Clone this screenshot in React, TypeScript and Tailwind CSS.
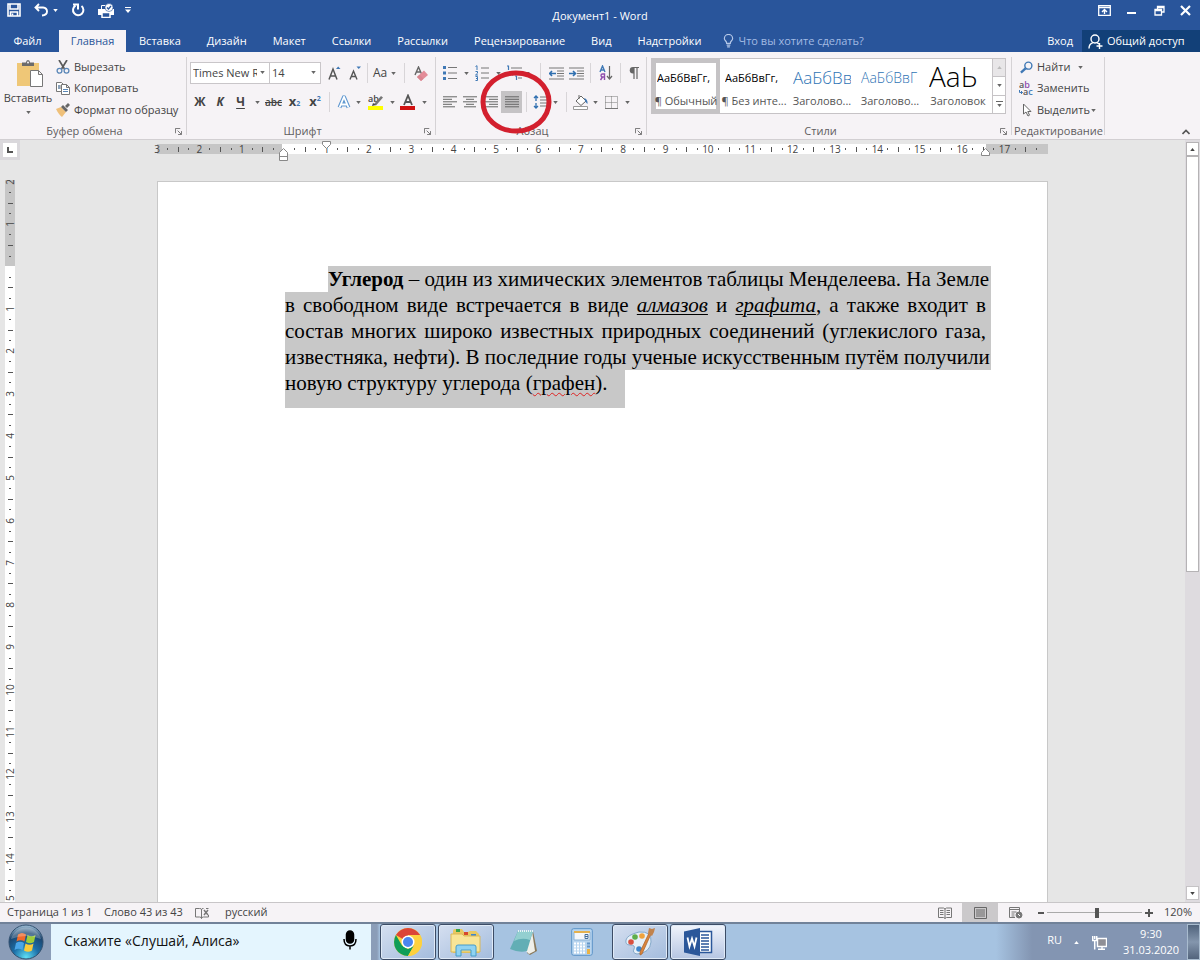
import React from 'react';
import clsx from 'clsx';

const TABS = ['Вставка', 'Дизайн', 'Макет', 'Ссылки', 'Рассылки', 'Рецензирование', 'Вид', 'Надстройки'];

const STYLES = [
  { preview: 'АаБбВвГг,', name: '¶ Обычный', look: 'text-[11px] text-black', active: true },
  { preview: 'АаБбВвГг,', name: '¶ Без инте...', look: 'text-[11px] text-black' },
  { preview: 'АаБбВв', name: 'Заголово...', look: 'text-[17px] font-light text-[#2e74b5]' },
  { preview: 'АаБбВвГ', name: 'Заголово...', look: 'text-[14px] font-light text-[#2e74b5]' },
  { preview: 'АаЬ', name: 'Заголовок', look: 'pb-1 text-[28px] font-light text-black' },
];

const Caret: React.FC<{ className?: string }> = ({ className }) => (
  <svg viewBox="0 0 6 4" className={clsx('w-[5px] h-[3px] shrink-0 fill-current', className)}>
    <path d="M0 0h6L3 4z" />
  </svg>
);

const Sep: React.FC<{ className?: string }> = ({ className }) => (
  <div className={clsx('w-px h-5 bg-[#d8d5d8] shrink-0', className)} />
);

interface BtnProps {
  label: string;
  className?: string;
  children?: React.ReactNode;
}

const Btn: React.FC<BtnProps> = ({ label, className, children }) => (
  <button aria-label={label} className={clsx('flex h-[22px] shrink-0 items-center justify-center', className)}>
    {children}
  </button>
);

const Drop: React.FC<{ label: string; className?: string }> = ({ label, className = 'w-3' }) => (
  <Btn label={label} className={className}>
    <Caret className="text-[#666]" />
  </Btn>
);

const Group: React.FC<{ title: string; className: string; launcher?: boolean; children: React.ReactNode }> = ({
  title,
  className,
  launcher = true,
  children,
}) => (
  <section className={clsx('relative flex shrink-0 flex-col pt-[5px]', className)}>
    <div className="flex-1">{children}</div>
    <div className="flex h-[15px] items-center text-[#5f5d60]">
      <span className={clsx('flex-1 whitespace-nowrap text-center', launcher && 'pr-[6px]')}>{title}</span>
      {launcher && (
        <button aria-label={`${title}: параметры`} className="pr-[5px]">
          <svg viewBox="0 0 8 8" className="h-[7px] w-[7px] fill-none stroke-[#666]">
            <path d="M.5 6V.5H6M3 3l4 4M7.5 3.5v4h-4" />
          </svg>
        </button>
      )}
    </div>
    <div className="absolute right-0 top-[5px] bottom-1 w-px bg-[#d5d2d5]" />
  </section>
);

const Lines: React.FC<{ rows: [number, number][] }> = ({ rows }) => (
  <svg viewBox="0 0 14 12" className="h-3 w-[14px] stroke-[#666]">
    {rows.map(([from, to], i) => (
      <path key={i} d={`M${from} ${i * 2.5 + 0.8}H${to}`} />
    ))}
  </svg>
);

const TitleBar: React.FC = () => (
  <div className="relative flex h-[30px] items-start justify-between text-white">
    <div className="flex h-5 items-center pl-[7px]">
      <button aria-label="Сохранить">
        <svg viewBox="0 0 14 14" className="h-[14px] w-[14px] fill-none stroke-white" strokeWidth="1.600">
          <path d="M1 1h12v12H1zM3 1v5h8V1M3.500 13V9h7v4" />
          <path d="M5.500 10.500v2" />
        </svg>
      </button>
      <button aria-label="Отменить" className="ml-[13px]">
        <svg viewBox="0 0 14 14" className="h-[14px] w-[14px] fill-none stroke-white" strokeWidth="1.900">
          <path d="M5 1L1.500 4.500 5 8M1.500 4.500H9q4 .5 4 4t-5 4" />
        </svg>
      </button>
      <button aria-label="Список отмены" className="ml-[5px]">
        <Caret />
      </button>
      <button aria-label="Повторить" className="ml-[13px]">
        <svg viewBox="0 0 14 14" className="h-[14px] w-[14px] fill-none stroke-white" strokeWidth="2">
          <path d="M4.500 2.600A5.200 5.200 0 1 0 10.500 3M7 6.500V1.500H2" />
        </svg>
      </button>
      <button aria-label="Быстрая печать" className="ml-[13px]">
        <svg viewBox="0 0 16 15" className="h-[15px] w-4 fill-none stroke-white">
          <path d="M0 6h16v6H0z" fill="white" stroke="none" />
          <path d="M3.500 6V2.500h4" />
          <path d="M4 9.500h8v5H4z" fill="#2a569b" strokeWidth="1.500" />
          <circle cx="11" cy="4.500" r="4" fill="white" stroke="#2a569b" strokeWidth=".6" />
          <path d="M9 4.500l1.500 1.500L13 3" stroke="#2a569b" strokeWidth="1.300" />
        </svg>
      </button>
      <button aria-label="Настройка панели быстрого доступа" className="ml-[11px]">
        <svg viewBox="0 0 6 6" className="h-[6px] w-[6px] fill-white">
          <path d="M0 0h6v1H0zM0 2.500h6L3 6z" />
        </svg>
      </button>
    </div>
    <h1 className="absolute left-1/2 top-2 -translate-x-1/2 whitespace-nowrap leading-4">Документ1 - Word</h1>
    <div className="flex h-5 items-center gap-[15px] pr-[9px]">
      <button aria-label="Параметры отображения ленты">
        <svg viewBox="0 0 13 11" className="h-[11px] w-[13px] fill-none stroke-white">
          <path d="M.7 .7h11.600v9.600H.7zM.7 2.500h11.600" strokeWidth="1.300" />
          <path d="M6.500 9V4.500M4 7l2.500-2.500L9 7" strokeWidth="1.400" />
        </svg>
      </button>
      <button aria-label="Свернуть">
        <svg viewBox="0 0 11 11" className="h-[11px] w-[11px] fill-white">
          <path d="M1 7h9v2H1z" />
        </svg>
      </button>
      <button aria-label="Восстановить" className="ml-[2px]">
        <svg viewBox="0 0 11 11" className="h-[11px] w-[11px] fill-none stroke-white" strokeWidth="1.300">
          <path d="M1 4.500h6.500V10H1zM1 5.500h6.500M3.500 4V1.500H10V7H8M3.500 2.500H10" />
        </svg>
      </button>
      <button aria-label="Закрыть">
        <svg viewBox="0 0 11 11" className="h-[11px] w-[11px] stroke-white" strokeWidth="2.200">
          <path d="M1 1l9 9M10 1l-9 9" />
        </svg>
      </button>
    </div>
  </div>
);

const TabBar: React.FC = () => (
  <nav className="flex h-[22px] items-stretch text-white">
    <button className="w-[59px] pr-1">Файл</button>
    <button className="w-[67px] bg-[#f6f3f6] text-[#2b579a]">Главная</button>
    {TABS.map((tab) => (
      <button key={tab} className="px-[13px]">
        {tab}
      </button>
    ))}
    <label className="ml-2 flex flex-1 items-center gap-[5px]">
      <svg viewBox="0 0 12 15" className="h-[14px] w-[11px] fill-none stroke-[#b5c8e8]" strokeWidth="1.300">
        <path d="M4 10Q4 8.500 2.500 7 1.500 6 1.500 4.700a4.300 4.200 0 0 1 9 0Q10.500 6 9.500 7 8 8.500 8 10zM4 12h4M4.500 14h3" />
      </svg>
      <input
        type="text"
        aria-label="Что вы хотите сделать?"
        placeholder="Что вы хотите сделать?"
        className="w-40 bg-transparent outline-none placeholder:text-[#a3bbe3]"
      />
    </label>
    <button className="px-[9px]">Вход</button>
    <button className="flex w-[118px] items-center gap-1 whitespace-nowrap bg-[#124078] pl-[6px]">
      <svg viewBox="0 0 15 15" className="h-[15px] w-[15px] shrink-0 fill-none stroke-white" strokeWidth="1.400">
        <circle cx="7" cy="5" r="4" />
        <path d="M1 14.500Q1 10 5 8.700M9 8.700l2 1.300M11.500 9v6M8.500 12h6" />
      </svg>
      Общий доступ
    </button>
  </nav>
);

const ClipboardGroup: React.FC = () => (
  <Group title="Буфер обмена" className="w-[187px]">
    <div className="flex">
      <button className="flex w-[56px] flex-col items-center pt-[2px]">
        <svg viewBox="0 0 28 30" className="ml-1 h-[30px] w-7">
          <path d="M1 4h22v23H1z" fill="#efc777" />
          <path d="M6 7V3.500h4Q10 1 12 1t2 2.500h4V7z" fill="#6b6b6b" />
          <circle cx="12" cy="3.500" r="1" fill="#f6f3f6" />
          <path d="M14.500 11.500h8l4 4v12h-12zM22.500 11.500v4h4" fill="white" stroke="#777" />
        </svg>
        <span className="mt-px leading-4">Вставить</span>
        <Caret className="mt-[5px] text-[#666]" />
      </button>
      <div className="flex flex-col">
        <button className="flex h-5 items-center gap-1">
          <svg viewBox="0 0 14 14" className="h-[14px] w-[14px] fill-none">
            <path d="M3 0l5.500 9M11 0L5.500 9" stroke="#5a5a5a" strokeWidth="1.700" />
            <circle cx="3.500" cy="10.800" r="2.400" stroke="#5b87b8" strokeWidth="1.300" />
            <circle cx="10.500" cy="10.800" r="2.400" stroke="#5b87b8" strokeWidth="1.300" />
          </svg>
          Вырезать
        </button>
        <button className="flex h-[22px] items-center gap-1">
          <svg viewBox="0 0 14 14" className="h-[14px] w-[14px] fill-white stroke-[#777]">
            <path d="M.5 1.500h5l2 2v7h-7zM2 5h3M2 7h3" />
            <path d="M5.500 3.500h5l3 3v7h-8zM10.500 3.500v3h3" />
            <path d="M7 8.500h5M7 10.500h5M2 5h2M2 7h2" stroke="#5b87b8" />
          </svg>
          Копировать
        </button>
        <button className="flex h-[22px] items-center gap-1 whitespace-nowrap">
          <svg viewBox="0 0 14 14" className="h-[14px] w-[14px] shrink-0">
            <path d="M0 6l5-2 5 5-4 5Q3 12 0 6z" fill="#efc07a" />
            <path d="M5 4l2-2 5 5-2 2zM9 3l3-3 2 2-3 3z" fill="#666" />
          </svg>
          Формат по образцу
        </button>
      </div>
    </div>
  </Group>
);

const FontGroup: React.FC = () => (
  <Group title="Шрифт" className="w-[249px]">
    <div className="flex items-center pl-[3px] pt-[5px]">
      <div className="relative h-[22px] w-[80px] border border-[#c9c6c9] bg-white">
        <select aria-label="Шрифт" className="h-full w-full appearance-none pl-[2px] pr-[12px] text-[11px] outline-none">
          <option>Times New Roman</option>
        </select>
        <Caret className="pointer-events-none absolute right-1 top-2 text-[#666]" />
      </div>
      <div className="relative -ml-px h-[22px] w-[52px] border border-[#c9c6c9] bg-white">
        <select aria-label="Размер шрифта" className="h-full w-full appearance-none pl-[2px] text-[11px] outline-none">
          <option>14</option>
        </select>
        <Caret className="pointer-events-none absolute right-1 top-2 text-[#666]" />
      </div>
      <Btn label="Увеличить размер шрифта" className="w-[26px]">
        <svg viewBox="0 0 13 14" className="h-[14px] w-[13px] fill-none">
          <path d="M1 13.500L5 3l4 10.500M2.500 10h5" stroke="#555" strokeWidth="1.500" />
          <path d="M8 3h4.500L10.200 .5z" fill="#3f78b5" />
        </svg>
      </Btn>
      <Btn label="Уменьшить размер шрифта" className="w-[16px]">
        <svg viewBox="0 0 12 14" className="h-[14px] w-3 fill-none">
          <path d="M1 13.500L4.500 5 8 13.500M2.500 10.500h4" stroke="#555" strokeWidth="1.400" />
          <path d="M7.500 .5H12L9.700 3z" fill="#3f78b5" />
        </svg>
      </Btn>
      <Sep className="ml-1" />
      <Btn label="Регистр" className="ml-[5px] gap-1">
        <span className="text-[12px]">Aa</span>
        <Caret className="text-[#666]" />
      </Btn>
      <Sep className="ml-2" />
      <Btn label="Удалить все форматирование" className="ml-2 w-4">
        <svg viewBox="0 0 14 15" className="h-[15px] w-[14px]">
          <path d="M1 9L4.500 1 8 9M2.500 6h4" fill="none" stroke="#666" strokeWidth="1.400" />
          <path d="M3 11l7-6.500 4 4.500-7 6z" fill="#e38c98" />
          <path d="M3 11l2.500-2.300 4 4L7 15z" fill="#d98590" />
        </svg>
      </Btn>
    </div>
    <div className="flex items-center pl-[3px] pt-[7px]">
      <Btn label="Полужирный" className="w-[20px] text-[12px] font-bold">Ж</Btn>
      <Btn label="Курсив" className="w-[20px] text-[12px] font-bold italic">К</Btn>
      <Btn label="Подчеркнутый" className="w-[21px] text-[12px] font-bold underline underline-offset-2">Ч</Btn>
      <Drop label="Тип подчеркивания" />
      <Btn label="Зачеркнутый" className="w-[21px] text-[10px] font-semibold line-through">abc</Btn>
      <Btn label="Подстрочный знак" className="w-[21px] text-[13px] font-bold">
        x<sub className="text-[7px] text-[#3f78b5]">2</sub>
      </Btn>
      <Btn label="Надстрочный знак" className="w-[20px] text-[13px] font-bold">
        x<sup className="text-[7px] text-[#3f78b5]">2</sup>
      </Btn>
      <Sep className="ml-1" />
      <Btn label="Текстовые эффекты" className="ml-1 w-[20px]">
        <svg viewBox="0 0 14 14" className="h-[14px] w-[14px] fill-none">
          <path d="M2.500 12.500L7 2l4.500 10.500M4 9.500h6" stroke="#5f97d0" strokeWidth="4" strokeLinejoin="round" />
          <path d="M2.500 12.500L7 2l4.500 10.500M4 9.500h6" stroke="white" strokeWidth="1.800" />
        </svg>
      </Btn>
      <Drop label="Список эффектов" className="w-2" />
      <Btn label="Цвет выделения текста" className="ml-1 w-[20px]">
        <svg viewBox="0 0 16 16" className="h-4 w-4">
          <text x="0" y="8" fontSize="9" fontWeight="600" fontFamily="Open Sans" fill="#444">ab</text>
          <path d="M6 10l7-8 2 1.500-7 8z" fill="#777" />
          <path d="M5 9l-1 3 4-1z" fill="#444" />
          <path d="M0 12h15v4H0z" fill="#ff0" />
        </svg>
      </Btn>
      <Drop label="Цвета выделения" />
      <Btn label="Цвет текста" className="w-[20px]">
        <svg viewBox="0 0 16 16" className="h-4 w-4">
          <path d="M4 11L8 1.500 12 11M5.500 8h5" fill="none" stroke="#555" strokeWidth="1.800" />
          <path d="M0 12h15v4H0z" fill="#d01212" />
        </svg>
      </Btn>
      <Drop label="Цвета текста" />
    </div>
  </Group>
);

const Indent: React.FC<{ flip?: boolean }> = ({ flip }) => (
  <svg viewBox="0 0 15 13" className="h-[13px] w-[15px] fill-none">
    <path d="M0 1h15M8 4h7M8 6.500h7M8 9h7M0 12h15" stroke="#777" />
    <path d={flip ? 'M0 6.500h6M4 4l2.500 2.500L4 9' : 'M7 6.500H1M3 4L.7 6.500 3 9'} stroke="#2f6fb0" strokeWidth="1.600" />
  </svg>
);

const ParagraphGroup: React.FC = () => (
  <Group title="Абзац" className="w-[211px]">
    <div className="flex items-center pl-[6px] pt-[5px]">
      <Btn label="Маркеры" className="w-4">
        <svg viewBox="0 0 14 14" className="h-[14px] w-[14px]">
          <path d="M0 0h3v3H0zM0 5.500h3v3H0zM0 11h3v3H0z" fill="#3f78b5" />
          <path d="M5 1.500h9M5 7h9M5 12.500h9" stroke="#777" />
        </svg>
      </Btn>
      <Drop label="Библиотека маркеров" className="ml-[2px] w-3" />
      <Btn label="Нумерация" className="ml-[2px] w-4">
        <svg viewBox="0 0 14 16" className="h-4 w-[14px]">
          <path d="M6 3h8M6 8h8M6 13h8" stroke="#777" />
          <path
            d="M.5 1.500L2 .7V5M.5 6.500h2v1.700L.5 10h2.500M.5 11.500h2v4h-2M1 13.500h1.500"
            fill="none"
            stroke="#3f78b5"
          />
        </svg>
      </Btn>
      <Drop label="Библиотека нумерации" className="ml-[2px] w-3" />
      <Btn label="Многоуровневый список" className="ml-[2px] w-[17px]">
        <svg viewBox="0 0 17 16" className="h-4 w-[17px]">
          <path d="M5 3h11M9 8h7M12 13h4" stroke="#777" />
          <path d="M1 1h1.500v4M4.500 6.500h2v4M9 11h1.500v4" fill="none" stroke="#3f78b5" strokeWidth="1.200" />
        </svg>
      </Btn>
      <Drop label="Списки" className="w-2" />
      <Sep className="ml-[9px]" />
      <Btn label="Уменьшить отступ" className="ml-[5px] w-[20px]"><Indent /></Btn>
      <Btn label="Увеличить отступ" className="w-[20px]"><Indent flip /></Btn>
      <Sep className="ml-1" />
      <Btn label="Сортировка" className="ml-2 w-[14px]">
        <svg viewBox="0 0 14 16" className="h-4 w-[14px] fill-none" strokeWidth="1.400">
          <path d="M1 7l2.500-6L6 7M2 5h3" stroke="#3f78b5" />
          <path d="M5.500 15V9H3.500a1.500 1.500 0 0 0 0 3h2M3.500 12L1.500 15" stroke="#8f4fae" />
          <path d="M10.500 1v13M8 11l2.500 3 2.500-3" stroke="#666" strokeWidth="1.200" />
        </svg>
      </Btn>
      <Sep className="ml-[7px]" />
      <Btn label="Отобразить все знаки" className="ml-1 w-[18px]">
        <svg viewBox="0 0 10 12" className="h-3 w-[10px]">
          <path d="M4 0h6v1H4z" fill="#666" />
          <path d="M5 0v12M8 0v12" stroke="#666" strokeWidth="1.200" />
          <path d="M5 0H4a3.200 3.200 0 0 0 0 6.500h1z" fill="#666" />
        </svg>
      </Btn>
    </div>
    <div className="flex items-center pl-1 pt-[7px]">
      <Btn label="По левому краю" className="w-[20px]"><Lines rows={[[0, 14], [0, 9], [0, 14], [0, 9], [0, 12]]} /></Btn>
      <Btn label="По центру" className="w-[20px]"><Lines rows={[[0, 14], [3, 11], [0, 14], [3, 11], [1, 13]]} /></Btn>
      <Btn label="По правому краю" className="w-[21px]"><Lines rows={[[0, 14], [5, 14], [0, 14], [5, 14], [2, 14]]} /></Btn>
      <Btn label="По ширине" className="w-[21px] bg-[#c5c3c5]"><Lines rows={[[0, 14], [0, 14], [0, 14], [0, 14], [0, 14]]} /></Btn>
      <Sep className="ml-1" />
      <Btn label="Интервал" className="ml-1 w-[18px]">
        <svg viewBox="0 0 14 14" className="h-[14px] w-[14px] fill-none">
          <path d="M3 1v5M1 3l2-2 2 2M3 8v5M1 11l2 2 2-2" stroke="#2f6fb0" strokeWidth="1.300" />
          <path d="M7 2h7M7 5h7M7 8h7M7 11h7" stroke="#777" />
        </svg>
      </Btn>
      <Drop label="Список интервалов" />
      <Sep className="ml-[5px]" />
      <Btn label="Заливка" className="ml-1 w-[20px]">
        <svg viewBox="0 0 16 15" className="h-[15px] w-4 fill-none">
          <path d="M3 6l5-5 5 5-5 4.500zM6 4V0" fill="white" stroke="#666" />
          <path d="M11 3q4 1 3.500 6l-2-2z" fill="#3f78b5" />
          <path d="M.5 11.500h14v3H.5z" fill="white" stroke="#999" />
        </svg>
      </Btn>
      <Drop label="Цвета заливки" className="w-[9px]" />
      <Btn label="Границы" className="w-[22px]">
        <svg viewBox="0 0 13 13" className="h-[13px] w-[13px] fill-none stroke-[#777]">
          <path d="M.5 .5h12M.5 6.500h12M.5 .5v12M6.500 .5v12M12.500 .5v12" strokeDasharray="1 1" />
          <path d="M0 12.500h13" />
        </svg>
      </Btn>
      <Drop label="Виды границ" className="w-[10px]" />
    </div>
    <svg viewBox="0 0 72 64" className="pointer-events-none absolute left-11 top-[18px] z-10 h-16 w-[72px]">
      <ellipse cx="36" cy="32" rx="33" ry="29" fill="none" stroke="#d3202e" strokeWidth="5" />
    </svg>
  </Group>
);

const StylesGroup: React.FC = () => (
  <Group title="Стили" className="w-[365px]">
    <div className="ml-1 mt-px flex h-[56px] w-[355px] border border-[#c6c3c6] bg-white">
      {STYLES.map((s, i) => (
        <button
          key={i}
          className={clsx(
            'flex w-[68px] shrink-0 flex-col items-center whitespace-nowrap border-4',
            s.active ? 'border-[#c5c3c5]' : 'border-transparent',
          )}
        >
          <span className={clsx('flex h-[31px] w-[58px] items-center overflow-hidden leading-[30px]', s.look)}>
            {s.preview}
          </span>
          <span className="leading-4 text-[#555]">{s.name}</span>
        </button>
      ))}
      <div className="flex flex-1 flex-col divide-y divide-[#c6c3c6] border-l border-[#c6c3c6] text-[#666]">
        <button aria-label="Вверх" className="flex flex-1 items-center justify-center bg-[#e8e6e8] text-[#bbb]">
          <Caret className="rotate-180" />
        </button>
        <button aria-label="Вниз" className="flex flex-1 items-center justify-center">
          <Caret />
        </button>
        <button aria-label="Все стили" className="flex flex-1 flex-col items-center justify-center gap-[2px]">
          <span className="h-px w-[7px] bg-[#666]" />
          <Caret />
        </button>
      </div>
    </div>
  </Group>
);

const EditingGroup: React.FC = () => (
  <Group title="Редактирование" className="w-[93px]" launcher={false}>
    <div className="flex flex-col pl-2">
      <button className="flex h-5 items-center gap-1">
        <svg viewBox="0 0 14 14" className="h-[13px] w-[13px] fill-none stroke-[#3f78b5]">
          <circle cx="9" cy="5" r="3.800" strokeWidth="1.500" />
          <path d="M6 8l-5 4.500" strokeWidth="2.600" />
        </svg>
        Найти
        <Caret className="ml-1 text-[#666]" />
      </button>
      <button className="flex h-[22px] items-center gap-1">
        <svg viewBox="0 0 14 15" className="-ml-px h-[15px] w-[14px]">
          <text x="0" y="7" fontSize="9" fontFamily="Open Sans" fontWeight="600" fill="#8f4fae">
            <tspan fill="#555">a</tspan>b
          </text>
          <text x="4" y="14" fontSize="9" fontFamily="Open Sans" fontWeight="600" fill="#3f78b5">
            <tspan fill="#555">a</tspan>c
          </text>
          <path d="M.5 9v2.500h3M2 10l1.500 1.500L2 13" fill="none" stroke="#3f78b5" />
        </svg>
        Заменить
      </button>
      <button className="flex h-[22px] items-center gap-1 whitespace-nowrap">
        <svg viewBox="0 0 13 14" className="h-[14px] w-[13px] shrink-0">
          <path d="M3.500 1v10l2.500-2 2 4 1.500-.8L7.800 8.500H11z" fill="white" stroke="#666" />
        </svg>
        <span>Выделить</span>
        <Caret className="-ml-[3px] text-[#666]" />
      </button>
    </div>
  </Group>
);

// four marks per centimetre: number, dot, dash, dot
const marks = (from: number, count: number) =>
  Array.from({ length: count + 1 }, (_, i) => {
    if (i === count) return '';
    if (i % 4 === 2) return 'dash';
    if (i % 4 !== 0) return 'dot';
    const n = Math.abs(from + i / 4);
    return n === 0 ? '' : String(n);
  });

const Ruler: React.FC = () => (
  <div className="relative mt-1 h-[10px] bg-[linear-gradient(90deg,#c6c6c6_14%,white_14%,white_93%,#c6c6c6_93%)]">
    <div className="flex h-full items-center justify-between text-[10px] text-[#444]">
      {marks(-3, 84).map((m, i) => (
        <div key={i} className="flex w-0 justify-center">
          {m === 'dash' && <span className="h-[5px] w-px shrink-0 bg-[#555]" />}
          {m === 'dot' && <span className="h-[2px] w-px shrink-0 bg-[#555]" />}
          {m !== 'dash' && m !== 'dot' && <span>{m}</span>}
        </div>
      ))}
    </div>
    <svg viewBox="0 0 9 13" className="absolute left-[14%] top-1 -ml-[3px] h-[13px] w-[9px] fill-white stroke-[#888]">
      <path d="M.5 12.500v-8l4-4 4 4v8zM.5 8.500h8" />
    </svg>
    <svg viewBox="0 0 9 8" className="absolute left-[19%] top-[-3px] -ml-1 h-2 w-[9px] fill-white stroke-[#888]">
      <path d="M.5 .5h8v3l-4 4-4-4z" />
    </svg>
    <svg viewBox="0 0 9 8" className="absolute left-[93%] top-1 -ml-[5px] h-2 w-[9px] fill-white stroke-[#888]">
      <path d="M.5 7.500h8v-3l-4-4-4 4z" />
    </svg>
  </div>
);

const SideRuler: React.FC = () => (
  <div className="flex w-5 shrink-0 flex-col">
    <button aria-label="Табуляция" className="flex h-5 w-5 items-center justify-center border-[3px] border-[#dad8dc] bg-white">
      <svg viewBox="0 0 6 6" className="h-[6px] w-[6px] fill-none stroke-[#555]" strokeWidth="2">
        <path d="M1 0v5h5" />
      </svg>
    </button>
    <div className="ml-[5px] mt-5 flex w-[10px] flex-1 flex-col justify-between overflow-hidden bg-[linear-gradient(#c6c6c6_86px,white_86px)] pt-[2px] text-[10px] text-[#444]">
      {marks(-2, 68).map((m, i) => (
        <div key={i} className="flex h-0 items-center justify-center">
          {m === 'dash' && <span className="h-px w-[5px] bg-[#555]" />}
          {m === 'dot' && <span className="h-px w-[2px] bg-[#555]" />}
          {m !== 'dash' && m !== 'dot' && <span className="-rotate-90 leading-none">{m || (i === 68 ? '15' : '')}</span>}
        </div>
      ))}
    </div>
  </div>
);

const Page: React.FC = () => (
  <article
    lang="ru"
    className="mt-[27px] flex-1 border border-b-0 border-[#c8c8c8] bg-white pl-[127px] pr-14 pt-[84px] font-['Liberation_Serif',serif] text-[21px] leading-[26px] text-black"
  >
    <p className="whitespace-nowrap">
      <span className="ml-[43px] block bg-[#c8c8c8] pr-[5px] [text-align-last:justify]">
        <b>Углерод</b> – один из химических элементов таблицы Менделеева. На Земле
      </span>
      <span className="block bg-[#c8c8c8] pr-[5px] [text-align-last:justify]">
        в свободном виде встречается в виде{' '}
        <i className="underline decoration-1 underline-offset-2">алмазов</i> и{' '}
        <i className="underline decoration-1 underline-offset-2">графита</i>, а также входит в
      </span>
      <span className="block bg-[#c8c8c8] pr-[5px] [text-align-last:justify]">
        состав многих широко известных природных соединений (углекислого газа,
      </span>
      <span className="block bg-[#c8c8c8] pr-[5px] [text-align-last:justify]">
        известняка, нефти). В последние годы ученые искусственным путём получили
      </span>
      <span className="inline-block h-[38px] bg-[#c8c8c8] pr-[17px]">
        новую структуру углерода (
        <span className="underline decoration-[#d22] decoration-wavy decoration-1 underline-offset-2">графен</span>).
      </span>
    </p>
  </article>
);

const ScrollBar: React.FC = () => (
  <div className="flex w-[15px] shrink-0 flex-col items-center bg-[#dedbdf] pb-[2px] pt-[2px]">
    <button aria-label="Прокрутить вверх" className="flex h-[14px] w-[13px] items-center justify-center border border-[#b5b3b5] bg-white">
      <Caret className="rotate-180" />
    </button>
    <div className="flex w-[13px] flex-1 flex-col">
      <div className="h-[57%] border border-[#b5b3b5] bg-white" />
    </div>
    <button aria-label="Прокрутить вниз" className="flex h-[14px] w-[13px] items-center justify-center border border-[#c5c3c5] bg-white">
      <Caret />
    </button>
  </div>
);

const StatusBar: React.FC = () => (
  <footer className="flex h-[20px] shrink-0 items-center border-t border-[#c8c6c8] bg-[#f6f3f6] pl-[7px]">
    <span className="w-[97px]">Страница 1 из 1</span>
    <span className="w-[91px]">Слово 43 из 43</span>
    <svg viewBox="0 0 15 12" className="h-3 w-[15px] fill-none stroke-[#777]">
      <path d="M6.500 2v9.500M.5 1.500h4q2 0 2 1 0-1 2-1M.5 1.500v8.500h4q2 0 2 1.500 0-1.500 2-1.500h5v-2M11 1.500h2.500" />
      <path d="M9 3l4 5M13 3L9 8" strokeWidth="1.500" />
    </svg>
    <span className="ml-[15px] flex-1">русский</span>
    <button aria-label="Режим чтения" className="flex w-[38px] justify-center pl-1">
      <svg viewBox="0 0 14 12" className="h-3 w-[14px] fill-none stroke-[#777]">
        <path d="M7 2v9.500M.5 1h5L7 2l1.500-1h5v9.500h-5L7 11.500l-1.500-1h-5zM2 3.500h3.500M2 5.500h3.500M2 7.500h3.500M8.500 3.500H12M8.500 5.500H12M8.500 7.500H12" />
      </svg>
    </button>
    <button aria-label="Разметка страницы" className="flex h-full w-9 items-center justify-center bg-[#cbc9cb]">
      <svg viewBox="0 0 13 12" className="h-3 w-[13px] fill-none stroke-[#666]">
        <path d="M.5 .5h12v11H.5zM2 3h9M2 5h9M2 7h9M2 9h9" />
      </svg>
    </button>
    <button aria-label="Веб-документ" className="flex w-9 justify-center">
      <svg viewBox="0 0 14 12" className="h-3 w-[14px] fill-none stroke-[#777]">
        <path d="M6 10.500H.5V.5h10V5M.5 2.500h10M2.500 5h5M2.500 7h3M2.500 9h3" />
        <circle cx="10" cy="8" r="3" fill="#777" />
        <path d="M9 7l2 2" stroke="white" />
      </svg>
    </button>
    <button aria-label="Уменьшить" className="ml-1 flex h-3 w-[6px] items-center">
      <span className="h-[2px] w-full bg-[#555]" />
    </button>
    <input
      type="range"
      aria-label="Масштаб"
      min={10}
      max={200}
      defaultValue={111}
      className="mx-[3px] h-3 w-[95px] appearance-none bg-[linear-gradient(#aaa,#aaa)] bg-[length:100%_1px] bg-center bg-no-repeat [&::-webkit-slider-thumb]:h-[10px] [&::-webkit-slider-thumb]:w-[4px] [&::-webkit-slider-thumb]:appearance-none [&::-webkit-slider-thumb]:bg-[#555]"
    />
    <button aria-label="Увеличить">
      <svg viewBox="0 0 8 8" className="h-2 w-2 stroke-[#555]" strokeWidth="2">
        <path d="M0 4h8M4 0v8" />
      </svg>
    </button>
    <span className="w-[47px] pr-2 text-right">120%</span>
  </footer>
);

const TaskBtn: React.FC<{ label: string; open?: boolean; active?: boolean; children: React.ReactNode }> = ({
  label,
  open,
  active,
  children,
}) => (
  <button
    aria-label={label}
    className={clsx(
      'flex w-14 items-center justify-center rounded-[3px] border',
      open ? 'border-[#3c4c66] shadow-[inset_0_0_0_1px_#dfeaf7]' : 'border-transparent',
      open && (active ? 'bg-linear-to-b from-[#f1f4fb] to-[#b5c5e2]' : 'bg-linear-to-br from-[#d5dff0] to-[#a3bcdd]'),
    )}
  >
    {children}
  </button>
);

const Taskbar: React.FC = () => (
  <div className="flex h-[38px] shrink-0 border-t-2 border-[#718299] bg-[linear-gradient(90deg,#8b9db8_377px,#a6c3e1_380px,#a6c3e1_83%,#8395b2_86%)]">
    <button aria-label="Пуск" className="flex w-[51px] items-center justify-center">
      <svg viewBox="0 0 36 36" className="h-9 w-9">
        <defs>
          <radialGradient id="orb" cx=".5" cy=".95" r=".95">
            <stop offset="0" stopColor="#5fe0f5" />
            <stop offset=".4" stopColor="#1c6fa8" />
            <stop offset=".75" stopColor="#1b456f" />
            <stop offset="1" stopColor="#a9c6dc" />
          </radialGradient>
        </defs>
        <circle cx="18" cy="18" r="17" fill="url(#orb)" stroke="#31506f" />
        <path d="M10 10.500q4-3 8 0l-1.500 7q-4-2.500-8 0z" fill="#ee6a2c" />
        <path d="M19.500 11q4 2.500 8 0l-1.500 7q-4 2.500-8 0z" fill="#9dcc3b" />
        <path d="M8 19q4-2.500 8 0l-1.500 7q-4-2.500-8 0z" fill="#4aa5e8" />
        <path d="M17.500 19.500q4 2.500 8 0l-1.500 7q-4 2.500-8 0z" fill="#fbcb3a" />
        <path d="M3 15a15.500 15.500 0 0 1 30 0q-15-6-30 0z" fill="white" opacity=".25" />
      </svg>
    </button>
    <label className="flex w-80 items-center bg-[#e4f5fe] pb-1 pl-[13px] pr-[14px]">
      <input
        type="text"
        aria-label="Голосовой поиск"
        placeholder="Скажите «Слушай, Алиса»"
        className="min-w-0 flex-1 bg-transparent text-[14px] outline-none placeholder:text-[#111]"
      />
      <svg viewBox="0 0 14 20" className="h-5 w-[14px] fill-none stroke-black" strokeWidth="1.500">
        <rect x="3.500" y="1" width="7" height="12" rx="3.500" fill="black" />
        <path d="M1 9q0 7 6 7t6-7M7 16v3.500" />
      </svg>
    </label>
    <div className="ml-[9px] flex gap-[2px]">
      <TaskBtn label="Google Chrome" open>
        <svg viewBox="0 0 28 28" className="h-7 w-7">
          <circle cx="14" cy="14" r="14" fill="#fdd13e" />
          <path d="M14 14L1.900 7A14 14 0 0 1 26.100 7H14z" fill="#db4437" />
          <path d="M1.900 7A14 14 0 0 0 14 28l6-10.500-6 3.500-6-3.500z" fill="#0f9d58" />
          <path d="M14 7h12.100A14 14 0 0 1 14 28l6-10.500z" fill="#fdd13e" />
          <circle cx="14" cy="14" r="6.500" fill="white" />
          <circle cx="14" cy="14" r="5" fill="#4a86ee" />
        </svg>
      </TaskBtn>
      <TaskBtn label="Проводник" open>
        <svg viewBox="0 0 32 29" className="h-[29px] w-8">
          <path d="M3 3q0-2 2-2h7l2 3h4l2-1h6l3 3v19H3z" fill="#e9c860" />
          <path d="M6 1h4v3H6z" fill="#3ba34a" />
          <path d="M14 4h4v3h-4z" fill="#d7482d" />
          <path d="M21 6h5v3h-5z" fill="#3f87cf" />
          <path d="M1 6h11l2 2h16v16H1z" fill="#f8e597" stroke="#d9b858" />
          <path d="M6 28v-9q0-2 2-2h16q2 0 2 2v9h-5v-6H11v6z" fill="#8fd3f2" stroke="#469cc8" />
        </svg>
      </TaskBtn>
      <TaskBtn label="Блокнот">
        <svg viewBox="0 0 30 28" className="h-7 w-[30px]">
          <path d="M24 3l4 20-7 4-3-2z" fill="#8a7a5c" />
          <path d="M23 3l3 20-6 3-3-3z" fill="#f0f0ea" />
          <path d="M9 3h15l-6 20Q10 25 1 21z" fill="#62aeb5" />
          <path d="M9 3h15l-3 9q-8-3-16 1z" fill="#93cfd0" />
          <path d="M9 3h15" stroke="#e8f5f5" strokeWidth="2" strokeDasharray="1 1" />
        </svg>
      </TaskBtn>
      <TaskBtn label="Калькулятор">
        <svg viewBox="0 0 22 28" className="h-7 w-[22px]">
          <rect x=".7" y=".7" width="20.600" height="26.600" rx="2" fill="#b8d5ef" stroke="#5c93c7" />
          <path d="M3 4h16v8H3z" fill="#f4f7fb" stroke="#8bb2d5" />
          <path d="M3 3h16v2H3z" fill="#e4b14f" />
          <path d="M14 6.500h3v4h-3zM14 8.500h3" fill="none" stroke="#446f9b" />
          <path d="M3 15.500h12M3 18.500h12M3 21.500h12M3 24.500h12" stroke="white" strokeWidth="2" strokeDasharray="2 1" />
          <path d="M16 15.500h3M16 18.500h3" stroke="#6596c7" strokeWidth="2" />
          <path d="M16 21h3v5h-3z" fill="#eab245" />
        </svg>
      </TaskBtn>
      <TaskBtn label="Paint" open>
        <svg viewBox="0 0 32 30" className="h-[30px] w-8">
          <path d="M15 5Q28 4 27 15T13 27q-5-1-3-5t-4-4q-5 0-4-5t13-8z" fill="#e6f0f8" stroke="#83a8c9" />
          <circle cx="7" cy="15" r="2.800" fill="#d95040" />
          <circle cx="11" cy="10" r="2.800" fill="#5eae4b" />
          <circle cx="18" cy="9" r="2.800" fill="#efa23c" />
          <circle cx="15" cy="22" r="2.800" fill="#3d86cc" />
          <path d="M27 7L18 27l-2 1 0-3 9-19z" fill="#d9853d" stroke="#a8612a" strokeWidth=".7" />
          <path d="M24 6l1-5 3 1 3-1-1 4-2 4z" fill="#c1834d" />
        </svg>
      </TaskBtn>
      <TaskBtn label="Word" open active>
        <svg viewBox="0 0 30 28" className="h-7 w-[30px]">
          <path d="M15 3.500h13.500v21H15z" fill="white" stroke="#2b579a" strokeWidth="1.500" />
          <path d="M18 7h8M18 10h8M18 13h8M18 16h8M18 19h8M18 22h8" stroke="#2b579a" strokeWidth="1.300" />
          <path d="M1 3.500L17 0v28L1 24.500z" fill="#2b579a" />
          <path d="M4.500 9.500l2 9 2.500-8 2.500 8 2-9" fill="none" stroke="white" strokeWidth="1.800" />
        </svg>
      </TaskBtn>
    </div>
    <div className="flex flex-1 items-center justify-end text-white">
      <span className="pb-1">RU</span>
      <button aria-label="Скрытые значки" className="ml-[11px]">
        <Caret className="h-1 w-[7px] rotate-180" />
      </button>
      <svg viewBox="0 0 15 15" className="ml-3 h-[15px] w-[15px] fill-none stroke-white">
        <path d="M5.500 3.500h9v8h-9z" fill="#8f8f96" strokeWidth="1.400" />
        <path d="M6 14.300h7M10 12v2" strokeWidth="1.400" />
        <path d="M.7 1v4.500h4V1M2.700 1v3M2.700 5.500v9" strokeWidth="1.500" />
      </svg>
      <time className="ml-[14px] w-[60px] text-center leading-4">
        9:30
        <br />
        31.03.2020
      </time>
      <button
        aria-label="Свернуть все окна"
        className="ml-[6px] h-full w-[13px] border border-[#a9bccf] bg-linear-to-b from-[#50637c] via-[#8496ad] to-[#53647c]"
      />
    </div>
  </div>
);

export default function App() {
  return (
    <div className="flex h-screen flex-col overflow-hidden bg-[#e6e6e6] font-['Open_Sans','Noto_Sans',sans-serif] text-[11px] text-[#444]">
      <header className="shrink-0 bg-[#29559b]">
        <TitleBar />
        <TabBar />
      </header>
      <div className="flex h-[88px] shrink-0 border-b border-[#d2cfd2] bg-[#f6f3f6]">
        <ClipboardGroup />
        <FontGroup />
        <ParagraphGroup />
        <StylesGroup />
        <EditingGroup />
        <button aria-label="Свернуть ленту" className="ml-auto self-end px-[10px] pb-1">
          <svg viewBox="0 0 8 6" className="h-[6px] w-2 fill-none stroke-[#555]" strokeWidth="1.600">
            <path d="M.5 5L4 1.500 7.500 5" />
          </svg>
        </button>
      </div>
      <main className="flex min-h-0 flex-1">
        <SideRuler />
        <div className="flex min-w-0 flex-1 justify-center">
          <div className="flex w-[891px] flex-col">
            <Ruler />
            <Page />
          </div>
        </div>
        <ScrollBar />
      </main>
      <StatusBar />
      <Taskbar />
    </div>
  );
}
